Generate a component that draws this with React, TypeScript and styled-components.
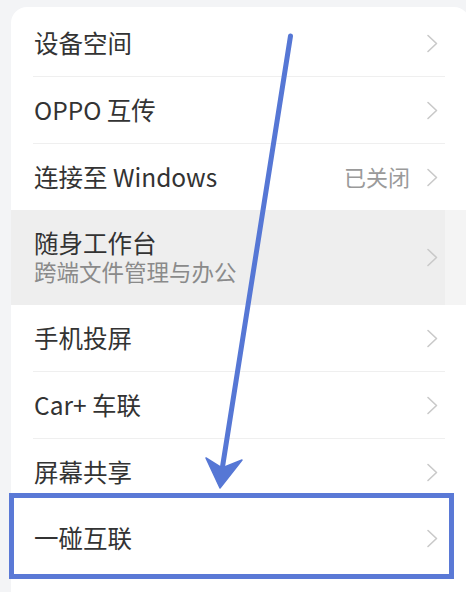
import React from 'react';
import styled, { createGlobalStyle } from 'styled-components';

const GlobalStyle = createGlobalStyle`
  html, body {
    margin: 0;
    padding: 0;
    background: #f3f4f6;
    overflow: hidden;
  }
  body {
    font-family: "Noto Sans CJK SC", "Noto Sans", sans-serif;
  }
`;

const Page = styled.div`
  position: relative;
  width: 466px;
  height: 592px;
  overflow: hidden;
  padding-top: 7px;
  box-sizing: border-box;
`;

const Card = styled.div`
  margin-left: 11px;
  width: 459px;
  min-height: 600px;
  background: #ffffff;
  border-radius: 16px 16px 0 0;
  padding-top: 3px;
  box-sizing: border-box;
`;

interface RowProps {
  divider?: boolean;
  tall?: boolean;
  active?: boolean;
}

const Row = styled.div<RowProps>`
  position: relative;
  display: flex;
  align-items: center;
  height: ${(p) => (p.tall ? '95px' : '66px')};
  padding: 0 31px 0 23px;
  margin-bottom: ${(p) => (p.divider ? '1px' : '0')};
  background: ${(p) =>
    p.active ? 'linear-gradient(to right, #eeeeee 0 434px, #f4f4f4 434px)' : 'transparent'};
  &::after {
    content: '';
    display: ${(p) => (p.divider ? 'block' : 'none')};
    position: absolute;
    left: 22px;
    right: 25px;
    bottom: -1px;
    height: 1px;
    background: #efefef;
  }
`;

const TextBlock = styled.div`
  flex: 1;
  display: flex;
  flex-direction: column;
  gap: 0;
  margin-top: -2px;
`;

const Title = styled.div`
  font-size: 24.5px;
  line-height: 29px;
  color: #333333;
`;

const Subtitle = styled.div`
  font-size: 22.5px;
  line-height: 29px;
  color: #8a8a8a;
`;

const Status = styled.span`
  font-size: 22px;
  color: #9a9a9a;
  margin-right: 16px;
  margin-top: -2px;
`;

const Chevron = () => (
  <svg width="13" height="19" viewBox="0 0 13 19" fill="none">
    <path d="M2 1.5 L10.5 9.5 L2 17.5" stroke="#c9c9c9" strokeWidth="1.6" strokeLinejoin="round" strokeLinecap="round" />
  </svg>
);

const Highlight = styled.div`
  position: absolute;
  top: -12px;
  bottom: -8px;
  left: -2px;
  right: 16px;
  border: 5px solid #5a79d6;
  pointer-events: none;
`;

const ArrowLayer = styled.svg`
  position: absolute;
  left: 0;
  top: 0;
  pointer-events: none;
`;

interface Item {
  title: string;
  subtitle?: string;
  status?: string;
  divider?: boolean;
  active?: boolean;
  boxed?: boolean;
}

const items: Item[] = [
  { title: '设备空间', divider: true },
  { title: 'OPPO 互传', divider: true },
  { title: '连接至 Windows', status: '已关闭' },
  { title: '随身工作台', subtitle: '跨端文件管理与办公', active: true },
  { title: '手机投屏', divider: true },
  { title: 'Car+ 车联', divider: true },
  { title: '屏幕共享' },
  { title: '一碰互联', boxed: true },
];

export default function App() {
  return (
    <Page>
      <GlobalStyle />
      <Card>
        {items.map((it) => (
          <Row key={it.title} divider={it.divider} tall={!!it.subtitle} active={it.active}>
            <TextBlock>
              <Title>{it.title}</Title>
              {it.subtitle && <Subtitle>{it.subtitle}</Subtitle>}
            </TextBlock>
            {it.status && <Status>{it.status}</Status>}
            <Chevron />
            {it.boxed && <Highlight />}
          </Row>
        ))}
      </Card>
      <ArrowLayer width="466" height="592" viewBox="0 0 466 592">
        <line x1="290.5" y1="36" x2="222" y2="470" stroke="#5677d5" strokeWidth="5" strokeLinecap="round" />
        <path d="M220 488 L206 458 L222 468 L242 460 Z" fill="#5677d5" stroke="#5677d5" strokeWidth="1.5" strokeLinejoin="round" />
      </ArrowLayer>
    </Page>
  );
}
